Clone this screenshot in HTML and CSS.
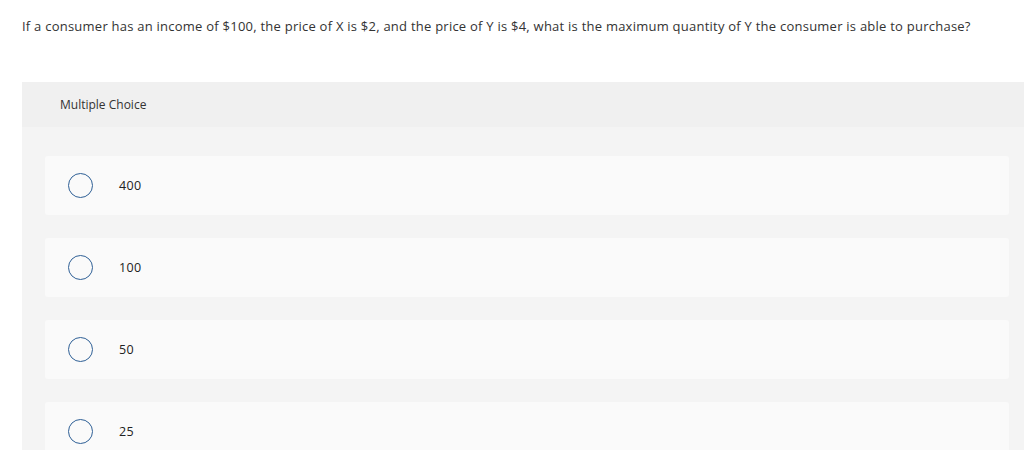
FILE: index.html
```html
<!DOCTYPE html>
<html>
<head>
<meta charset="utf-8">
<link rel="stylesheet" href="styles.css">
</head>
<body>
<p class="question">If a consumer has an income of $100, the price of X is $2, and the price of Y is $4, what is the maximum quantity of Y the consumer is able to purchase?</p>
<section class="panel">
  <div class="panel-head">Multiple Choice</div>
  <div class="options">
    <label class="option"><span class="radio"></span><span class="opt-text">400</span></label>
    <label class="option"><span class="radio"></span><span class="opt-text">100</span></label>
    <label class="option"><span class="radio"></span><span class="opt-text">50</span></label>
    <label class="option"><span class="radio"></span><span class="opt-text">25</span></label>
  </div>
</section>
</body>
</html>
```
FILE: styles.css
```css
html, body {
  margin: 0;
  padding: 0;
  background: #fff;
  font-family: "Open Sans", "Lato", sans-serif;
  color: #333;
  overflow: hidden;
}
.question {
  margin: 0;
  padding: 17px 0 0 22px;
  font-size: 13px;
  line-height: 18px;
  letter-spacing: 0.24px;
  height: 82px;
  box-sizing: border-box;
}
.panel {
  margin-left: 22px;
  background: #f4f4f4;
}
.panel-head {
  background: #f0f0f0;
  height: 45px;
  padding-left: 38px;
  display: flex;
  align-items: center;
  font-size: 12px;
  color: #333;
}
.options {
  padding: 29px 15px 40px 23px;
  display: flex;
  flex-direction: column;
  gap: 22px;
}
.option {
  display: flex;
  align-items: center;
  height: 59px;
  background: #fafafa;
  border-radius: 3px;
  padding-left: 23px;
}
.option + .option {
  margin-top: 1px;
}
.radio {
  width: 23px;
  height: 23px;
  border: 1.5px solid #2f6096;
  border-radius: 50%;
  flex: none;
}
.opt-text {
  margin-left: 26px;
  font-size: 12.5px;
  letter-spacing: 0.3px;
  color: #222;
}
```
